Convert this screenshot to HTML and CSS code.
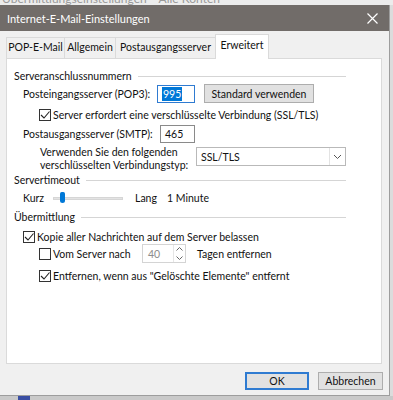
FILE: index.html
```html
<!DOCTYPE html>
<html lang="de">
<head>
  <meta charset="UTF-8">
  <meta name="viewport" content="width=device-width, initial-scale=1.0">
  <title>Internet-E-Mail-Einstellungen</title>
  <link rel="stylesheet" href="styles.css">
</head>
<body>

<div class="behind">
  <span>Übermittlungseinstellungen&nbsp;&nbsp;&nbsp;&nbsp;Alle Konten</span>
</div>

<div class="dialog">
  <div class="titlebar">
    <span class="title">Internet-E-Mail-Einstellungen</span>
    <svg class="close" width="11" height="11" viewBox="0 0 11 11">
      <path d="M0.5 0.5 L10.5 10.5 M10.5 0.5 L0.5 10.5" stroke="#fff" stroke-width="1.2" fill="none"/>
    </svg>
  </div>

  <div class="tabs">
    <div class="tab tab-pop">POP-E-Mail</div>
    <div class="tab tab-general">Allgemein</div>
    <div class="tab tab-out">Postausgangsserver</div>
    <div class="tab tab-adv active">Erweitert</div>
  </div>

  <div class="panel">
    <!-- Serveranschlussnummern -->
    <div class="group-head"><span>Serveranschlussnummern</span><div class="rule"></div></div>

    <div class="row row-pop">
      <span class="label">Posteingangsserver (POP3):</span>
      <div class="field field-pop"><span class="selected">995</span></div>
      <div class="btn btn-std">Standard verwenden</div>
    </div>

    <div class="row row-ssl">
      <span class="check on"><svg width="10" height="10" viewBox="0 0 10 10"><path d="M1 5 L4 8 L9.5 1.5" stroke="#222" stroke-width="1.1" fill="none"/></svg></span>
      <span>Server erfordert eine verschlüsselte Verbindung (SSL/TLS)</span>
    </div>

    <div class="row row-smtp">
      <span class="label">Postausgangsserver (SMTP):</span>
      <div class="field field-smtp">465</div>
    </div>

    <div class="row row-type">
      <span class="type-label">Verwenden Sie den folgenden<br>verschlüsselten Verbindungstyp:</span>
      <div class="select">
        <span>SSL/TLS</span>
        <span class="select-arrow"><svg width="9" height="6" viewBox="0 0 9 6"><path d="M1 1 L4.5 4.5 L8 1" stroke="#555" stroke-width="1" fill="none"/></svg></span>
      </div>
    </div>

    <!-- Servertimeout -->
    <div class="group-head head-timeout"><span>Servertimeout</span><div class="rule"></div></div>

    <div class="row row-slider">
      <span class="label-short">Kurz</span>
      <div class="slider"><div class="track"></div><div class="thumb"></div></div>
      <span class="lang">Lang</span>
      <span>1 Minute</span>
    </div>

    <!-- Übermittlung -->
    <div class="group-head head-send"><span>Übermittlung</span><div class="rule"></div></div>

    <div class="row row-copy">
      <span class="check on"><svg width="10" height="10" viewBox="0 0 10 10"><path d="M1 5 L4 8 L9.5 1.5" stroke="#222" stroke-width="1.1" fill="none"/></svg></span>
      <span>Kopie aller Nachrichten auf dem Server belassen</span>
    </div>

    <div class="row row-days">
      <span class="check"></span>
      <span class="days-label">Vom Server nach</span>
      <div class="spinner">
        <span class="spin-value">40</span>
        <span class="spin-buttons">
          <svg width="7" height="4" viewBox="0 0 7 4"><path d="M0.5 3.5 L3.5 0.5 L6.5 3.5" stroke="#666" fill="none"/></svg>
          <svg width="7" height="4" viewBox="0 0 7 4"><path d="M0.5 0.5 L3.5 3.5 L6.5 0.5" stroke="#666" fill="none"/></svg>
        </span>
      </div>
      <span>Tagen entfernen</span>
    </div>

    <div class="row row-deleted">
      <span class="check on"><svg width="10" height="10" viewBox="0 0 10 10"><path d="M1 5 L4 8 L9.5 1.5" stroke="#222" stroke-width="1.1" fill="none"/></svg></span>
      <span>Entfernen, wenn aus "Gelöschte Elemente" entfernt</span>
    </div>
  </div>

  <div class="buttons">
    <div class="btn btn-ok">OK</div>
    <div class="btn btn-cancel">Abbrechen</div>
  </div>
</div>

<div class="taskbar">
  <span class="task-icon"></span>
</div>

</body>
</html>
```

FILE: styles.css
```css
/* Basic reset */
*, *::before, *::after {
  box-sizing: border-box;
}

body, html {
  margin: 0;
  padding: 0;
}

body {
  width: 393px;
  height: 400px;
  overflow: hidden;
  background: #dcdcdc;
  font-family: 'Lato', 'Noto Sans', sans-serif;
  font-size: 10.5px;
  color: #111;
  white-space: nowrap;
}

/* Window behind the dialog, only its bottom edge shows */
.behind {
  height: 5px;
  overflow: hidden;
  background: #ececec;
  color: #9a9a9a;
  font-size: 12px;
  padding-left: 2px;
}

.behind span {
  display: block;
  margin-top: -9px;
  line-height: 16px;
}

/* Dialog */
.dialog {
  width: 390px;
  height: 391px;
  background: #f0f0f0;
  border-right: 1px solid #9d9d9d;
  border-bottom: 1px solid #9d9d9d;
}

.titlebar {
  height: 26px;
  background: #716c69;
  color: #fff;
  display: flex;
  align-items: center;
  justify-content: space-between;
  padding: 0 11px 0 7px;
}

.title {
  font-size: 11px;
}

/* Tabs */
.tabs {
  display: flex;
  align-items: flex-end;
  height: 27px;
  padding-left: 6px;
}

.tab {
  height: 21px;
  line-height: 19px;
  text-align: center;
  border: 1px solid #dadada;
  border-bottom: none;
  margin-right: -1px;
  background: #f0f0f0;
}

.tab-pop { width: 59px; }
.tab-general { width: 52px; }
.tab-out { width: 101px; }
.tab-adv { width: 54px; }

.tab.active {
  height: 25px;
  line-height: 21px;
  background: #fff;
  position: relative;
  margin-bottom: -1px;
}

/* Tab panel */
.panel {
  margin: 0 7px 0 6px;
  height: 306px;
  background: #fff;
  border: 1px solid #dadada;
  padding: 9px 35px 0 7px;
}

.group-head {
  display: flex;
  align-items: center;
  height: 16px;
}

.group-head span {
  margin-right: 6px;
}

.rule {
  flex: 1;
  border-top: 1px solid #d5d5d5;
}

.head-timeout {
  margin-top: 0;
}

.head-send {
  margin-top: 2px;
}

.row {
  display: flex;
  align-items: center;
}

.label {
  width: 143px;
  padding-left: 9px;
}

.row-pop {
  height: 19px;
}

.field {
  height: 18px;
  border: 1px solid #7a7a7a;
  display: flex;
  align-items: center;
  padding-left: 4px;
}

.field-pop {
  width: 38px;
  border-color: #2f7bd1;
}

.selected {
  background: #0078d7;
  color: #fff;
  padding: 0 1px;
  line-height: 14px;
}

.btn {
  height: 19px;
  display: flex;
  align-items: center;
  justify-content: center;
  background: #e1e1e1;
  border: 1px solid #adadad;
}

.btn-std {
  width: 110px;
  margin-left: 9px;
}

.check {
  width: 12px;
  height: 12px;
  border: 1px solid #333;
  background: #fff;
  display: flex;
  align-items: center;
  justify-content: center;
  margin-right: 2px;
  flex-shrink: 0;
}

.row-ssl {
  height: 13px;
  margin-top: 5px;
  padding-left: 25px;
}

.row-smtp {
  height: 19px;
  margin-top: 3px;
}

.field-smtp {
  width: 35px;
  margin-left: 3px;
  border-color: #8a8a8a;
}

.row-type {
  margin-top: 3px;
  align-items: flex-start;
}

.type-label {
  width: 183px;
  padding-left: 26px;
  line-height: 13px;
}

.select {
  width: 151px;
  height: 19px;
  margin-top: 1px;
  border: 1px solid #b9b9b9;
  display: flex;
  align-items: center;
  justify-content: space-between;
  padding-left: 4px;
}

.select-arrow {
  width: 16px;
  height: 17px;
  border-left: 1px solid #e3e3e3;
  display: flex;
  align-items: center;
  justify-content: center;
}

/* Slider */
.row-slider {
  height: 18px;
  margin-top: 1px;
  padding-left: 9px;
}

.label-short {
  width: 30px;
}

.slider {
  position: relative;
  width: 70px;
  height: 12px;
  display: flex;
  align-items: center;
}

.track {
  width: 100%;
  height: 3px;
  background: #e3e3e3;
  border: 1px solid #d6d6d6;
}

.thumb {
  position: absolute;
  left: 7px;
  top: 0;
  width: 5px;
  height: 11px;
  background: #0078d7;
  border-radius: 2px 2px 3px 3px;
}

.lang {
  margin-left: 12px;
  width: 32px;
}

/* Übermittlung */
.row-copy {
  height: 13px;
  margin-top: 5px;
  padding-left: 9px;
}

.row-days {
  height: 19px;
  margin-top: 1px;
  padding-left: 25px;
}

.days-label {
  width: 89px;
}

.spinner {
  width: 44px;
  height: 19px;
  border: 1px solid #d4d4d4;
  display: flex;
  align-items: center;
  justify-content: space-between;
  padding-left: 5px;
  margin-right: 11px;
}

.spin-value {
  color: #8d8d8d;
}

.spin-buttons {
  width: 12px;
  height: 17px;
  display: flex;
  flex-direction: column;
  align-items: center;
  justify-content: space-around;
  border-left: 1px solid #e6e6e6;
}

.spin-buttons svg {
  display: block;
}

.row-deleted {
  height: 13px;
  margin-top: 6px;
  padding-left: 25px;
}

/* Dialog buttons */
.buttons {
  display: flex;
  justify-content: flex-end;
  gap: 9px;
  padding: 8px 6px 0 0;
}

.btn-ok {
  width: 64px;
  height: 18px;
  border: 2px solid #2f7bd1;
}

.btn-cancel {
  width: 65px;
  height: 18px;
}

/* Below the dialog */
.taskbar {
  height: 8px;
  background: #c9c9c9;
  padding-left: 18px;
}

.task-icon {
  display: block;
  width: 12px;
  height: 8px;
  background: #3a4fa3;
}
```
